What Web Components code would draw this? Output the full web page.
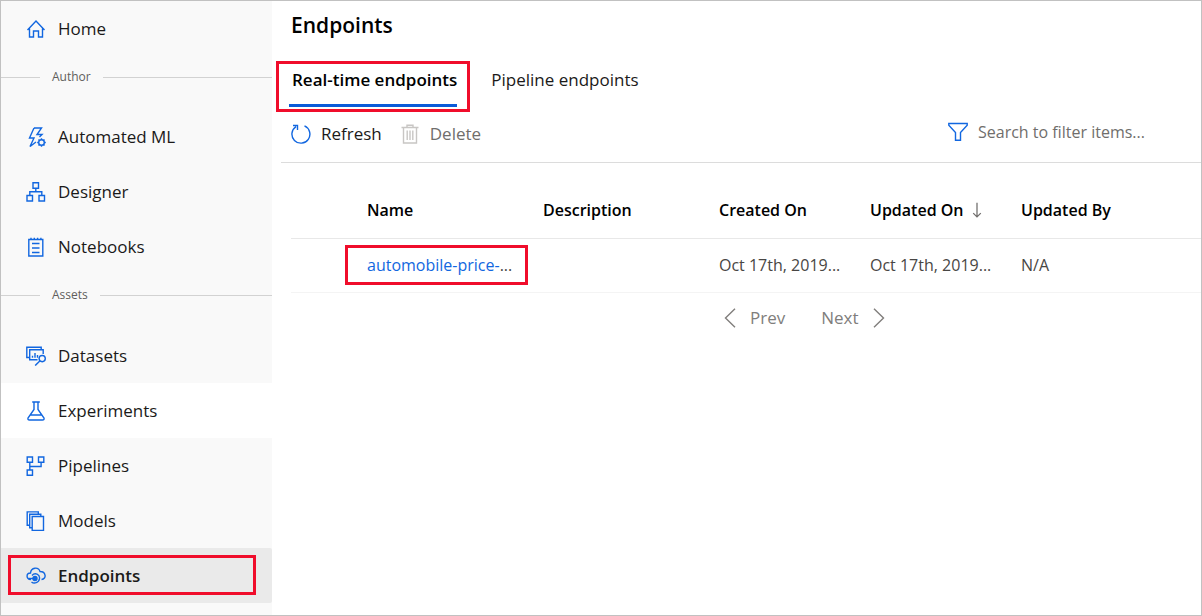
<!DOCTYPE html>
<html lang="en">
<head>
<meta charset="utf-8">
<title>Endpoints</title>
<style>
  html { height: 100%; }
  body {
    margin: 0; min-height: 100%; box-sizing: border-box; display: flex;
    border: 1px solid #c1c1c1; background: #fff; color: #1b1a19;
    font: 17px/24px "Open Sans", "Noto Sans", sans-serif;
    --blue: #1267e0; --mark: #f00d2b;
  }
  studio-app { flex: 1; min-width: 0; }
</style>
</head>
<body>
<studio-app></studio-app>
<script>
const ICONS = {
  home: '<path d="M1.5 11 10 2l8.500 9M3.500 9.500V18h4v-6h5v6h4V9.500"/>',
  automl: '<path d="M8 1h7.500L11 7.500h5L13.500 10M8 1 3.500 11H8L4 19.500 10 15M3.500 11"/><circle cx="15.500" cy="15.500" r="2.800"/><path d="M15.500 11.200v1.500M15.500 18.300v1.500M11.200 15.500h1.500M18.300 15.500h1.500M12.500 12.500l1 1M17.500 17.500l1 1M12.500 18.500l1-1M17.500 13.500l1-1"/>',
  designer: '<path d="M7 .8h5.500v5.400H7zM1 13.500h5.500V19H1zM13 13.500h5.500V19H13zM9.800 6.200v3.600M3.800 13.500V9.800h12v3.700"/>',
  notebook: '<path d="M2.800 2.500h14V19h-14zM6 6.500h7.500M6 11h7.500M6 15.500h7.500M5 .8v2M8.300 .8v2M11.600 .8v2M14.900 .8v2"/>',
  datasets: '<path d="M3.500 11.500H.8V1.200h14.400v2.300M11.500 13.800H3.700V3.700h13.500V8M6.500 9.800v2M9 7v4.800M11.500 9v2.800"/><circle cx="16.200" cy="12.600" r="3.100"/><path d="M14 14.800 9.200 19.600"/>',
  flask: '<path d="M6.200 1h7.600M8 1v7.500L2 17q-.5 2 1.500 2h13q2 0 1.500-2L12 8.500V1M4.500 14h11"/>',
  pipelines: '<path d="M1.200 1h5.300v5.300H1.200zM12.500 1h5.300v5.300h-5.300zM1.200 14h5.300v5.300H1.200zM3.800 6.300V14M3.800 10.500h11.300V6.300"/>',
  models: '<path d="M6.200 5.500h11.300v14H6.200zM6.200 16.800H3.700V3.200h11.100v2.300M3.700 14.300H1.200V.9h11.100v2.300"/>',
  cloud: '<path d="M5 13.500C-.5 13 .2 7 4.500 7 5 1.200 12.500.5 14 5.500c6 0 7 7.500 1.500 8M6 9.500c3-3.500 8-1 7.500 3-.5 4.500-5.500 5.500-8 3.500"/><circle cx="9" cy="12.500" r="2" fill="currentColor"/><path d="M2.500 12.500H8"/>',
  refresh: '<path d="M13.500 1.900A9 9 0 1 1 5 2.600M2 1.500h4.500V6"/>',
  trash: '<path d="M1.500 3.500h17M7 3.500V1.200h6v2.300M3.500 3.500V19h13V3.500"/><path d="M7.200 6.500v9.500M10 6.500v9.500M12.800 6.500v9.500"/>',
  filter: '<path d="M.8 1.500h18.400v1.700L12.500 10.500V18.200h-5V10.500L.8 3.200z"/>',
  left: '<path d="M15 .8 5.500 10l9.500 9.200"/>',
  right: '<path d="M5 .8 14.500 10 5 19.200"/>',
  down: '<path d="M10 2v15.500M5.800 13.500 10 17.700l4.200-4.200"/>'
};

const define = (name, html, setup) => {
  customElements.define(name, class extends HTMLElement {
    constructor() {
      super();
      const t = document.createElement('template');
      t.innerHTML = html;
      this.attachShadow({ mode: 'open' }).append(t.content.cloneNode(true));
    }
    connectedCallback() { if (setup) setup(this, this.shadowRoot); }
  });
};

define('line-icon', `
  <style>
    :host { display: block; flex: none; width: 20px; height: 20px; color: var(--blue); }
    svg { display: block; width: 100%; height: 100%; fill: none; stroke: currentColor; stroke-width: 1.4; }
  </style>
  <svg viewBox="0 0 20 20" aria-hidden="true"></svg>`,
  (el, root) => { root.querySelector('svg').innerHTML = ICONS[el.getAttribute('name')]; });

define('nav-item', `
  <style>
    :host { display: block; position: relative; }
    :host([hovered]) { background: #fff; }
    :host([current]) { background: #eaeaea; border-radius: 0 2px 2px 0; font-weight: 600; }
    :host([current])::after {
      content: ""; position: absolute; inset: 7px 16px 8px 7px; border: 3px solid var(--mark); pointer-events: none;
    }
    a { display: flex; align-items: center; gap: 12px; height: 55px; padding-left: 25px; color: inherit; text-decoration: none; }
  </style>
  <a href="#"><line-icon></line-icon><span><slot></slot></span></a>`,
  (el, root) => {
    const old = root.querySelector('line-icon');
    const icon = document.createElement('line-icon');
    icon.setAttribute('name', el.getAttribute('icon'));
    old.replaceWith(icon);
    if (el.hasAttribute('current')) root.querySelector('a').setAttribute('aria-current', 'page');
  });

define('nav-divider', `
  <style>
    :host { display: flex; align-items: center; gap: 12px; height: 42px; margin-bottom: 11px; font-size: 12px; line-height: 16px; color: #605e5c; }
    :host::before, :host::after { content: ""; height: 1px; background: #d2d2d2; }
    :host::before { width: 39px; }
    :host::after { flex: 1; }
  </style>
  <slot></slot>`);

define('side-nav', `
  <style>
    :host { display: block; background: #f9f9f9; }
    .assets { padding-top: 1px; }
  </style>
  <nav aria-label="Workspace">
    <nav-item icon="home">Home</nav-item>
    <nav-divider>Author</nav-divider>
    <nav-item icon="automl">Automated ML</nav-item>
    <nav-item icon="designer">Designer</nav-item>
    <nav-item icon="notebook">Notebooks</nav-item>
    <nav-divider>Assets</nav-divider>
    <div class="assets">
      <nav-item icon="datasets">Datasets</nav-item>
      <nav-item icon="flask" hovered>Experiments</nav-item>
      <nav-item icon="pipelines">Pipelines</nav-item>
      <nav-item icon="models">Models</nav-item>
      <nav-item icon="cloud" current>Endpoints</nav-item>
    </div>
  </nav>`);

define('page-tabs', `
  <style>
    :host { display: block; }
    div { display: flex; gap: 28px; padding-left: 17px; }
    button { position: relative; height: 46px; padding: 0 3px 8px; border: 0; background: none; font: inherit; color: #1b1a19; }
    [aria-selected=true] { font-weight: 600; color: #000; }
    [aria-selected=true]::before { content: ""; position: absolute; inset: auto 3px 0 0; height: 3px; background: #0a5bd8; }
    [aria-selected=true]::after { content: ""; position: absolute; inset: 0 -10px -5px -13px; border: 3px solid var(--mark); }
  </style>
  <div role="tablist">
    <button role="tab" aria-selected="true">Real-time endpoints</button>
    <button role="tab" aria-selected="false">Pipeline endpoints</button>
  </div>`);

define('command-bar', `
  <style>
    :host { display: flex; align-items: center; height: 55px; margin-left: 9px; padding: 0 36px 0 10px; border-bottom: 1px solid #dcdcdc; }
    button { display: flex; align-items: center; gap: 10px; margin-right: 18px; padding: 0 0 2px; border: 0; background: none; font: inherit; color: #1b1a19; }
    button:disabled { color: #706e6c; }
    button:disabled line-icon { color: #c8c6c4; }
    label { display: flex; align-items: center; gap: 10px; margin-left: auto; padding-bottom: 6px; }
    input { width: 187px; padding: 0; border: 0; outline: 0; background: none; font: inherit; font-size: 16px; }
    input::placeholder { color: #706e6c; opacity: 1; }
  </style>
  <button><line-icon name="refresh"></line-icon>Refresh</button>
  <button disabled><line-icon name="trash"></line-icon>Delete</button>
  <label><line-icon name="filter"></line-icon><input type="text" aria-label="Filter" placeholder="Search to filter items..."></label>`);

define('endpoint-table', `
  <style>
    :host { display: block; margin-left: 19px; padding-top: 20px; font-size: 16px; }
    table { width: 100%; border-collapse: separate; border-spacing: 0; table-layout: fixed; }
    .pick { width: 76px; } .wide { width: 176px; } .date { width: 151px; }
    th, td { position: relative; padding: 0 0 2px; text-align: left; white-space: nowrap; box-sizing: border-box; }
    th { height: 56px; border-bottom: 1px solid #e8e8e8; font-weight: 600; color: #000; }
    td { height: 54px; border-bottom: 1px solid #f4f4f4; color: #484644; }
    th span { display: flex; align-items: center; gap: 4px; }
    th line-icon { width: 18px; height: 18px; color: #706e6c; }
    a { color: var(--blue); text-decoration: none; }
    .marked::after { content: ""; position: absolute; inset: 6px 15px 7px -22px; border: 3px solid var(--mark); pointer-events: none; }
  </style>
  <table>
    <colgroup><col class="pick"><col class="wide"><col class="wide"><col class="date"><col class="date"><col></colgroup>
    <thead><tr>
      <th></th><th>Name</th><th>Description</th><th>Created On</th>
      <th aria-sort="descending"><span>Updated On<line-icon name="down"></line-icon></span></th><th>Updated By</th>
    </tr></thead>
    <tbody><tr>
      <td></td><td class="marked"><a href="#">automobile-price-</a>...</td><td></td>
      <td>Oct 17th, 2019...</td><td>Oct 17th, 2019...</td><td>N/A</td>
    </tr></tbody>
  </table>`);

define('table-pager', `
  <style>
    :host { display: flex; gap: 36px; padding: 13px 0 13px 448px; }
    button { display: flex; align-items: center; gap: 10px; padding: 0; border: 0; background: none; font: inherit; color: #807e7c; }
    line-icon { color: inherit; }
  </style>
  <button><line-icon name="left"></line-icon>Prev</button>
  <button>Next<line-icon name="right"></line-icon></button>`);

define('studio-app', `
  <style>
    :host { display: grid; grid-template-columns: 271px minmax(0, 1fr); }
    h1 { margin: 0; padding: 8px 0 20px 19px; font-size: 21px; line-height: 32px; font-weight: 600; color: #000; }
  </style>
  <side-nav></side-nav>
  <main>
    <h1>Endpoints</h1>
    <page-tabs></page-tabs>
    <command-bar></command-bar>
    <endpoint-table></endpoint-table>
    <table-pager></table-pager>
  </main>`);
</script>
</body>
</html>
